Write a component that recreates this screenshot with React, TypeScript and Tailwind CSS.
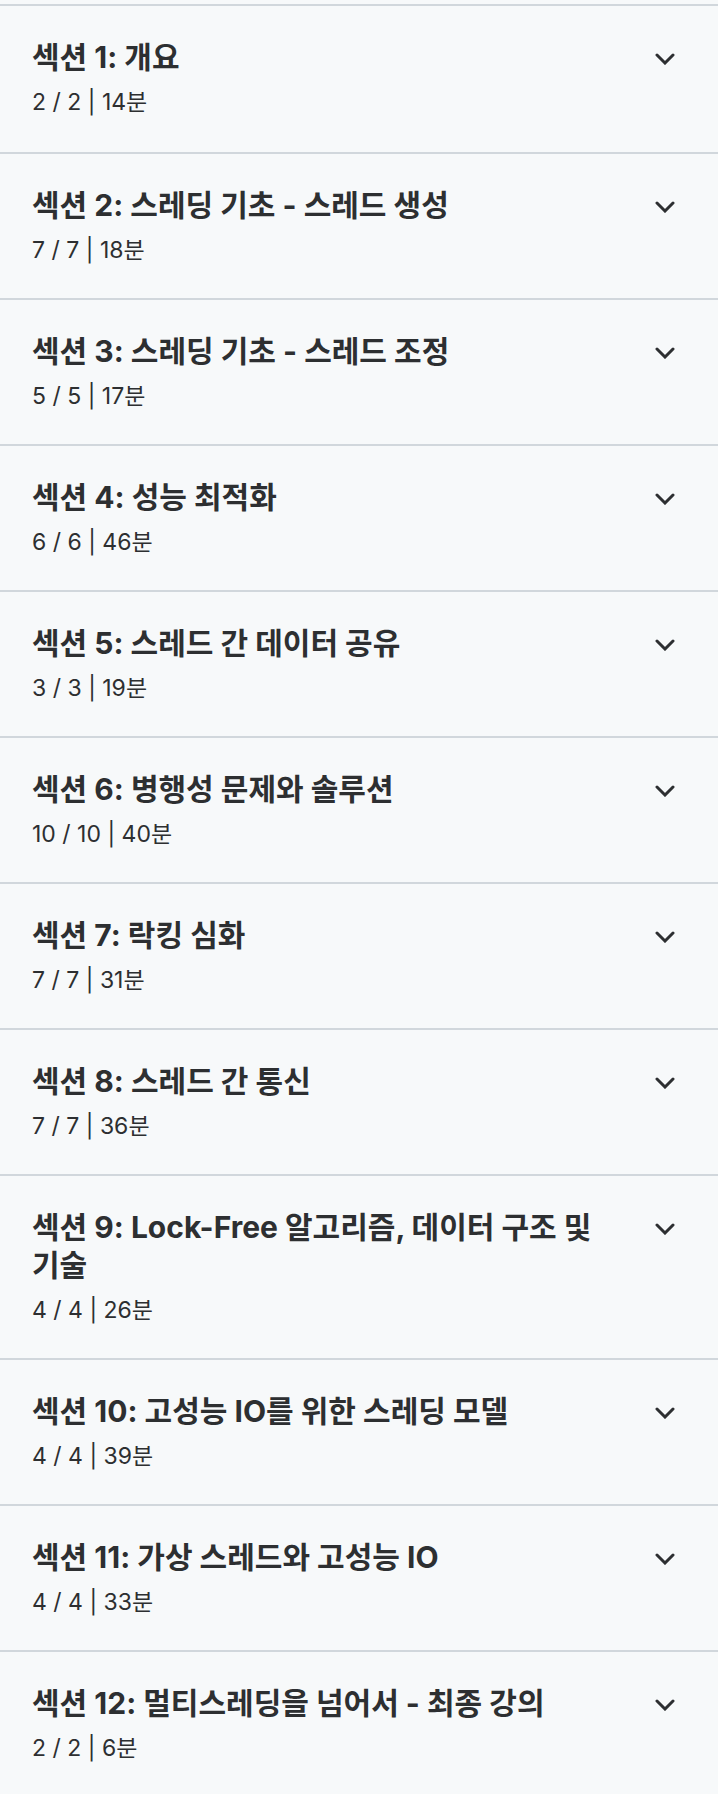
import React from 'react'

const sections = [
  { title: '섹션 1: 개요', done: 2, total: 2, mins: 14 },
  { title: '섹션 2: 스레딩 기초 - 스레드 생성', done: 7, total: 7, mins: 18 },
  { title: '섹션 3: 스레딩 기초 - 스레드 조정', done: 5, total: 5, mins: 17 },
  { title: '섹션 4: 성능 최적화', done: 6, total: 6, mins: 46 },
  { title: '섹션 5: 스레드 간 데이터 공유', done: 3, total: 3, mins: 19 },
  { title: '섹션 6: 병행성 문제와 솔루션', done: 10, total: 10, mins: 40 },
  { title: '섹션 7: 락킹 심화', done: 7, total: 7, mins: 31 },
  { title: '섹션 8: 스레드 간 통신', done: 7, total: 7, mins: 36 },
  { title: '섹션 9: Lock-Free 알고리즘, 데이터 구조 및 기술', done: 4, total: 4, mins: 26 },
  { title: '섹션 10: 고성능 IO를 위한 스레딩 모델', done: 4, total: 4, mins: 39 },
  { title: '섹션 11: 가상 스레드와 고성능 IO', done: 4, total: 4, mins: 33 },
  { title: '섹션 12: 멀티스레딩을 넘어서 - 최종 강의', done: 2, total: 2, mins: 6 },
]

function Chevron() {
  return (
    <svg className="block" width="20" height="12" viewBox="0 0 20 12" fill="none">
      <path d="M2 2 L10 10 L18 2" stroke="#2d2f31" strokeWidth="3" strokeLinecap="round" strokeLinejoin="miter" />
    </svg>
  )
}

function SectionRow({ section, first }: { section: any; first: boolean }) {
  return (
    <button
      className={
        first
          ? 'w-full flex items-start gap-[32px] pl-[32px] pr-[29px] pt-[32px] pb-[33px] border-b-2 border-[#d1d7dc] text-left'
          : 'w-full flex items-start gap-[32px] pl-[32px] pr-[29px] pt-[32px] pb-[31px] border-b-2 border-[#d1d7dc] text-left'
      }
    >
      <div className="flex-1 min-w-0">
        <h3 className="text-[30px] leading-[38px] font-bold text-[#2d2f31] [font-family:Inter,'Noto_Sans_CJK_KR',sans-serif]">
          {section.title}
        </h3>
        <div className="mt-[9px] text-[23px] leading-[34px] text-[#2d2f31] [font-family:Inter,'Noto_Sans_CJK_KR',sans-serif]">
          {section.done} / {section.total} | {section.mins}분
        </div>
      </div>
      <div className="w-[48px] h-[38px] pt-[3px] flex items-center justify-center shrink-0">
        <Chevron />
      </div>
    </button>
  )
}

export default function App() {
  return (
    <div className="min-h-screen bg-[#f7f9fa]">
      <div className="h-[4px]" />
      <div className="border-t-2 border-[#d1d7dc] flex flex-col">
        {sections.map((s, i) => (
          <SectionRow key={i} section={s} first={i === 0} />
        ))}
      </div>
    </div>
  )
}
